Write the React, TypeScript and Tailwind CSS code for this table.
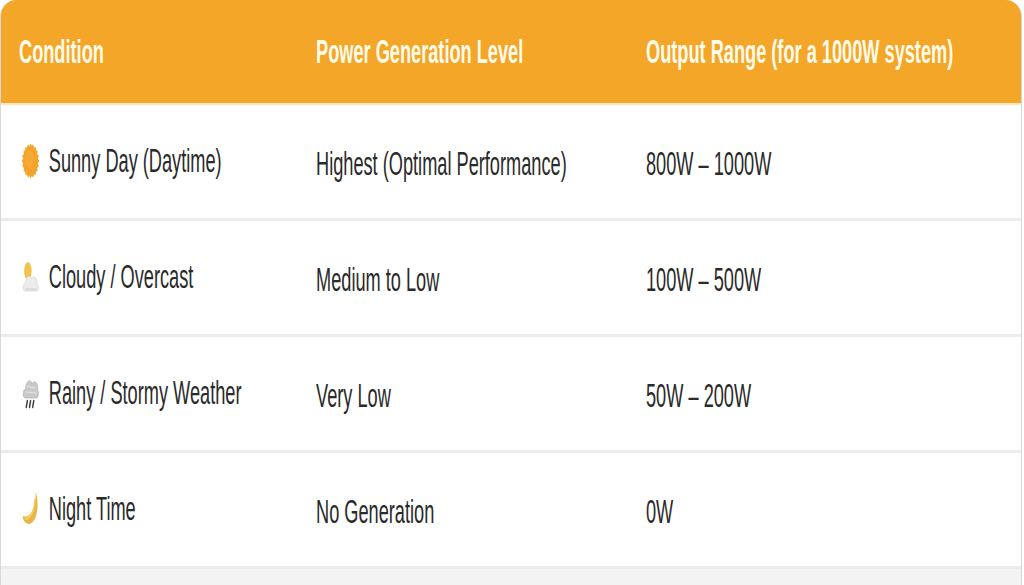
import React from "react";

const scaled = "inline-flex items-center origin-left scale-x-[0.535] whitespace-nowrap";

function Sun() {
  const rays = Array.from({ length: 20 }, (_, i) => {
    const a = (i / 20) * Math.PI * 2;
    return (
      <circle
        key={i}
        cx={16 + Math.cos(a) * 14.5}
        cy={17 + Math.sin(a) * 15.5}
        r="1.4"
        fill="#eea21f"
      />
    );
  });
  return (
    <svg width="32" height="34" viewBox="0 0 32 34">
      {rays}
      <ellipse cx="16" cy="17" rx="14.5" ry="15.5" fill="#f4a42a" />
      <ellipse cx="14" cy="15" rx="8" ry="9" fill="#f7b040" opacity="0.5" />
    </svg>
  );
}

function Cloud() {
  return (
    <svg width="32" height="34" viewBox="0 0 30 34">
      <ellipse cx="10" cy="11" rx="7" ry="9" fill="#f2c14e" />
      <path
        d="M4 31 C0 31 0 23 6 23 C6 16 14 14 17 19 C20 15 28 17 27 24 C31 25 30 31 26 31 Z"
        fill="#ececec"
        stroke="#d6d6d6"
        strokeWidth="1"
      />
      <path d="M5 28 L26 28 L26 31 L4 31 Z" fill="#dcdcdc" />
    </svg>
  );
}

function Rain() {
  return (
    <svg width="32" height="34" viewBox="0 0 30 34">
      <path
        d="M5 22 C0 22 0 13 6 13 C6 5 15 2 18 8 C22 3 30 7 28 14 C31 15 30 22 26 22 Z"
        fill="#c9c9c9"
        stroke="#b4b4b4"
        strokeWidth="1"
      />
      <path d="M8 10 L24 12 M7 16 L26 17" stroke="#dedede" strokeWidth="1.5" />
      <line x1="9" y1="25" x2="7" y2="31" stroke="#3a3a3a" strokeWidth="2.6" strokeLinecap="round" />
      <line x1="15" y1="25" x2="13" y2="31" stroke="#3a3a3a" strokeWidth="2.6" strokeLinecap="round" />
      <line x1="21" y1="25" x2="19" y2="31" stroke="#3a3a3a" strokeWidth="2.6" strokeLinecap="round" />
    </svg>
  );
}

function Moon() {
  return (
    <svg width="32" height="36" viewBox="0 0 30 36">
      <path
        d="M25 2 C32 15 27 33 12 34 C5 34 1 30 0 26 C13 29 24 20 25 2 Z"
        fill="#e9b544"
      />
      <path d="M23 9 C23 21 15 28 5 29" stroke="#f4cd6c" strokeWidth="2.5" fill="none" />
    </svg>
  );
}

const rows = [
  { icon: <Sun />, cond: "Sunny Day (Daytime)", level: "Highest (Optimal Performance)", out: "800W – 1000W" },
  { icon: <Cloud />, cond: "Cloudy / Overcast", level: "Medium to Low", out: "100W – 500W" },
  { icon: <Rain />, cond: "Rainy / Stormy Weather", level: "Very Low", out: "50W – 200W" },
  { icon: <Moon />, cond: "Night Time", level: "No Generation", out: "0W" },
];

export default function App() {
  return (
    <div
      className="w-[1024px] h-[585px] bg-white overflow-hidden flex flex-col"
      style={{ fontFamily: '"Liberation Sans", Arial, sans-serif' }}
    >
      <div className="w-[1022px] flex-1 flex flex-col border-r border-l border-[#d8d8d8] rounded-t-[16px] overflow-hidden">
        <div className="h-[105px] shrink-0 bg-[#f4a629] grid grid-cols-[297px_330px_1fr] items-center text-[#fffbe9] font-bold text-[34px] border-b-[2px] border-[#fbe7c0]">
          <div className="pl-[18px]">
            <span className={scaled}>Condition</span>
          </div>
          <div className="pl-[18px]">
            <span className={scaled}>Power Generation Level</span>
          </div>
          <div className="pl-[18px]">
            <span className={scaled}>Output Range (for a 1000W system)</span>
          </div>
        </div>
        {rows.map((r) => (
          <div
            key={r.cond}
            className="h-[116px] shrink-0 grid grid-cols-[297px_330px_1fr] items-center pt-[4px] text-[#2a2a2a] text-[34px] border-b-[3px] border-[#ececec]"
          >
            <div className="pl-[21px]">
              <span className={scaled + " gap-[18px]"}>
                {r.icon}
                <span>{r.cond}</span>
              </span>
            </div>
            <div className="pl-[18px]">
              <span className={scaled}>{r.level}</span>
            </div>
            <div className="pl-[18px]">
              <span className={scaled}>{r.out}</span>
            </div>
          </div>
        ))}
        <div className="flex-1 bg-[#f3f3f3]" />
      </div>
    </div>
  );
}
